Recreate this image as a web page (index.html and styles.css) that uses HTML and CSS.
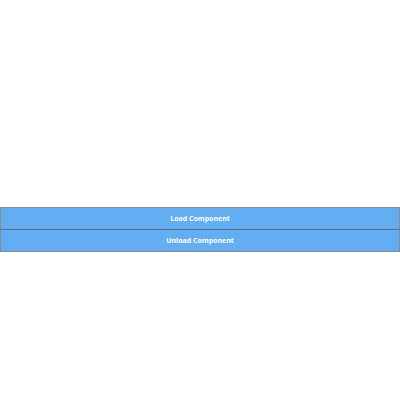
FILE: index.html
```html
<!DOCTYPE html>
<html>
<head>
<meta charset="utf-8">
<link rel="stylesheet" href="styles.css">
</head>
<body>
<div class="stack">
  <button class="btn">Load Component</button>
  <button class="btn btn-second">Unload Component</button>
</div>
</body>
</html>
```
FILE: styles.css
```css
html, body {
  margin: 0;
  padding: 0;
  width: 400px;
  height: 400px;
  background: #ffffff;
}
.stack {
  display: flex;
  flex-direction: column;
  padding-top: 207px;
}
.btn {
  display: block;
  width: 400px;
  height: 23px;
  margin: 0;
  padding: 0;
  background: #63adf2;
  border: 1px solid #8a8a8a;
  color: #ffffff;
  font-family: "Open Sans", sans-serif;
  font-weight: 700;
  font-size: 7px;
  text-align: center;
}
.btn-second {
  border-top-color: #4f6d8c;
  margin-top: -1px;
}
```
